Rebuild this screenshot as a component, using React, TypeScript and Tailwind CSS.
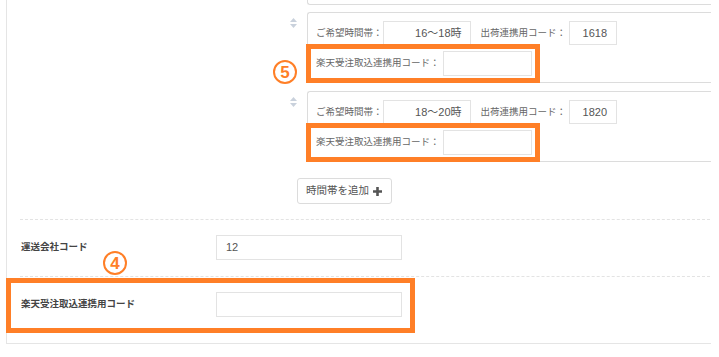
import React from "react";

function SortHandle() {
  return (
    <svg width="7" height="10" viewBox="0 0 7 10">
      <path d="M3.5 0 L7 4 H0 Z" fill="#c9d1dc" />
      <path d="M0 6 H7 L3.5 10 Z" fill="#c9d1dc" />
    </svg>
  );
}

function Badge({ n }: { n: string }) {
  return (
    <span className="flex h-[24px] w-[24px] items-center justify-center rounded-full border-2 border-[#ff7f27] text-[17px] font-bold leading-none text-[#ff7f27]">
      {n}
    </span>
  );
}

function SlotCard({ range, code, badge }: { range: string; code: string; badge?: boolean }) {
  return (
    <div className="flex">
      <div className="w-[18px] pl-[1px] pt-[6px]">
        <SortHandle />
      </div>
      <div className="flex-1 rounded-l-[3px] border border-r-0 border-[#dcdcdc] pb-[6px] pl-[8px] pt-[8px]">
        <div className="flex h-[24px] items-center">
          <span className="text-[9.5px] text-[#666]">ご希望時間帯：</span>
          <div className="h-[24px] w-[88px] border border-[#e3e3e3] pr-[8px] text-right text-[11px] leading-[22px] text-[#555]">
            {range}
          </div>
          <span className="ml-[10px] text-[9.5px] text-[#666]">出荷連携用コード：</span>
          <div className="ml-[3px] h-[24px] w-[48px] border border-[#e3e3e3] pr-[9px] text-right text-[11px] leading-[22px] text-[#555]">
            {code}
          </div>
        </div>
        <div className="relative mt-[6px] flex h-[25px] items-center">
          <span className="text-[9.5px] text-[#666]">楽天受注取込連携用コード：</span>
          <div className="ml-[3px] h-[25px] w-[89px] border border-[#e3e3e3]" />
          <div className="absolute -left-[10px] -top-[7px] h-[39px] w-[234px] border-[5px] border-[#ff7f27]" />
          {badge && (
            <div className="absolute -left-[43px] top-[9px]">
              <Badge n="5" />
            </div>
          )}
        </div>
      </div>
    </div>
  );
}

export default function App() {
  return (
    <div className="min-h-[357px] bg-white font-['Liberation_Sans','Noto_Sans_CJK_JP',sans-serif]">
      <div className="ml-[6px] w-[705px] border-b border-l border-[#e5e5e5]">
        {/* time slots */}
        <div className="pb-[15px] pl-[282px]">
          <div className="ml-[18px] h-[5px] rounded-bl-[3px] border-b border-l border-[#dcdcdc]" />
          <div className="mt-[7px]">
            <SlotCard range="16〜18時" code="1618" badge />
          </div>
          <div className="mt-[8px]">
            <SlotCard range="18〜20時" code="1820" />
          </div>
          <div className="mt-[16px] pl-[8px]">
            <button className="flex h-[26px] items-center gap-[4px] rounded-[3px] border border-[#dcdcdc] bg-white pl-[8px] pr-[9px] text-[10.5px] text-[#555]">
              時間帯を追加
              <svg width="9" height="9" viewBox="0 0 9 9">
                <path d="M3.2 0 H5.8 V3.2 H9 V5.8 H5.8 V9 H3.2 V5.8 H0 V3.2 H3.2 Z" fill="#555" />
              </svg>
            </button>
          </div>
        </div>

        {/* carrier code */}
        <div className="ml-[13px] mr-[1px] flex items-center border-t border-dashed border-[#e3e3e3] pb-[16px] pt-[15px]">
          <div className="w-[196px] pl-[1px] text-[9.5px] font-bold text-[#444]">運送会社コード</div>
          <div className="h-[25px] w-[186px] border border-[#e3e3e3] pl-[9px] text-[11px] leading-[23px] text-[#555]">12</div>
        </div>

        {/* rakuten code */}
        <div className="relative ml-[13px] mr-[1px] flex items-center border-t border-dashed border-[#e3e3e3] pb-[26px] pt-[15px]">
          <div className="w-[196px] pl-[1px] text-[9.5px] font-bold text-[#444]">楽天受注取込連携用コード</div>
          <div className="h-[25px] w-[186px] border border-[#e3e3e3]" />
          <div className="absolute -left-[14px] top-[1px] h-[55px] w-[409px] border-[5px] border-[#ff7f27]" />
          <div className="absolute left-[83px] -top-[26px]">
            <Badge n="4" />
          </div>
        </div>
      </div>
    </div>
  );
}
